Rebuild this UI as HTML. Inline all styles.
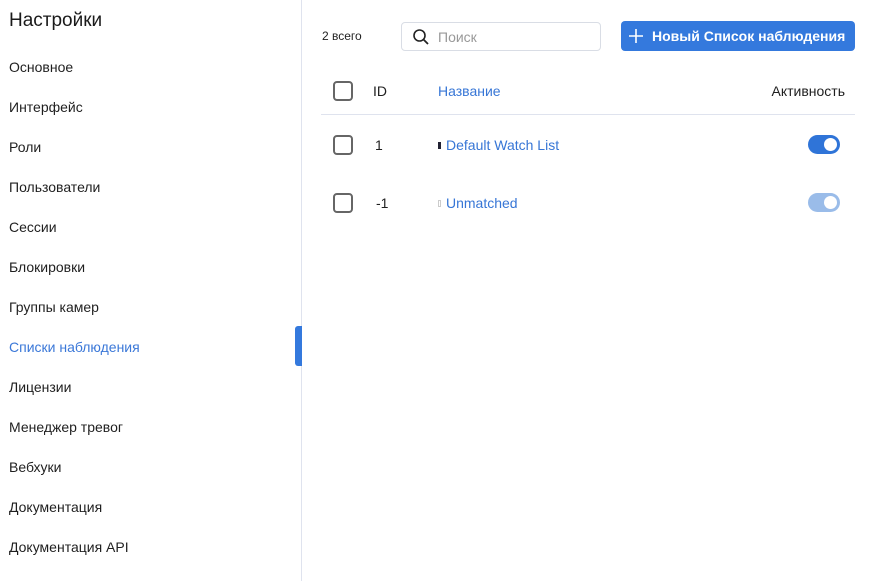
<!DOCTYPE html>
<html><head><meta charset="utf-8"><style>
*{margin:0;padding:0;box-sizing:border-box}
body{width:876px;height:581px;background:#fff;font-family:"Liberation Sans","DejaVu Sans",sans-serif;color:#1f1f1f;position:relative;overflow:hidden}
.sb{position:absolute;left:0;top:0;width:302px;height:581px;border-right:1px solid #dfe3ee}
.h{position:absolute;left:9px;top:10px;font-size:19px;color:#1a1a1a}
.it{position:absolute;left:9px;font-size:14px;line-height:20px;color:#1f1f1f}
.act{color:#3b78d8}
.ind{position:absolute;left:295px;top:326px;width:7px;height:40px;background:#3479dd;border-radius:3px 0 0 3px}
.abs{position:absolute}
.cb{position:absolute;left:333px;width:20px;height:20px;border:2px solid #666;border-radius:4px}
.tg{position:absolute;left:808px;width:32px;height:19px;border-radius:10px;background:#2f74d8}
.tg::after{content:"";position:absolute;right:3px;top:3px;width:13px;height:13px;border-radius:50%;background:#fff}
.lk{color:#3776d6;font-size:14px}
</style></head><body>
<div class="sb">
<div class="h">Настройки</div>
<div class="it" style="top:57px">Основное</div>
<div class="it" style="top:97px">Интерфейс</div>
<div class="it" style="top:137px">Роли</div>
<div class="it" style="top:177px">Пользователи</div>
<div class="it" style="top:217px">Сессии</div>
<div class="it" style="top:257px">Блокировки</div>
<div class="it" style="top:297px">Группы камер</div>
<div class="it act" style="top:337px">Списки наблюдения</div>
<div class="it" style="top:377px">Лицензии</div>
<div class="it" style="top:417px">Менеджер тревог</div>
<div class="it" style="top:457px">Вебхуки</div>
<div class="it" style="top:497px">Документация</div>
<div class="it" style="top:537px">Документация API</div>
<div class="ind"></div>
</div>
<div class="abs" style="left:322px;top:29px;font-size:12px">2 всего</div>
<div class="abs" style="left:401px;top:22px;width:200px;height:29px;border:1px solid #d9dde5;border-radius:4px">
<svg class="abs" style="left:10px;top:5px" width="18" height="18" viewBox="0 0 18 18"><circle cx="7.5" cy="7.5" r="5.5" fill="none" stroke="#222" stroke-width="1.6"/><path d="M11.5 11.5L16 16" stroke="#222" stroke-width="1.8"/></svg>
<span class="abs" style="left:36px;top:6px;font-size:14px;color:#999">Поиск</span></div>
<div class="abs" style="left:621px;top:21px;width:234px;height:30px;background:#3479dd;border-radius:4px;color:#fff;font-size:14px;font-weight:bold">
<svg class="abs" style="left:7px;top:7px" width="16" height="16"><path d="M8 1V15M1 8H15" stroke="#fff" stroke-width="1.6"/></svg>
<span class="abs" style="left:31px;top:7px">Новый Список наблюдения</span></div>
<div class="cb" style="top:81px"></div>
<div class="abs" style="left:373px;top:83px;font-size:14px">ID</div>
<div class="abs lk" style="left:438px;top:83px">Название</div>
<div class="abs" style="right:31px;top:83px;font-size:14px">Активность</div>
<div class="abs" style="left:321px;top:114px;width:534px;height:1px;background:#dfe3ee"></div>
<div class="cb" style="top:135px"></div>
<div class="abs" style="left:375px;top:137px;font-size:14px">1</div>
<div class="abs" style="left:438px;top:142px;width:3px;height:7px;background:#223"></div>
<div class="abs lk" style="left:446px;top:137px">Default Watch List</div>
<div class="tg" style="top:135px"></div>
<div class="cb" style="top:193px"></div>
<div class="abs" style="left:376px;top:195px;font-size:14px">-1</div>
<div class="abs" style="left:438px;top:200px;width:3px;height:7px;border:1px solid #ccc"></div>
<div class="abs lk" style="left:446px;top:195px">Unmatched</div>
<div class="tg" style="top:193px;background:#9abce9"></div>
</body></html>
